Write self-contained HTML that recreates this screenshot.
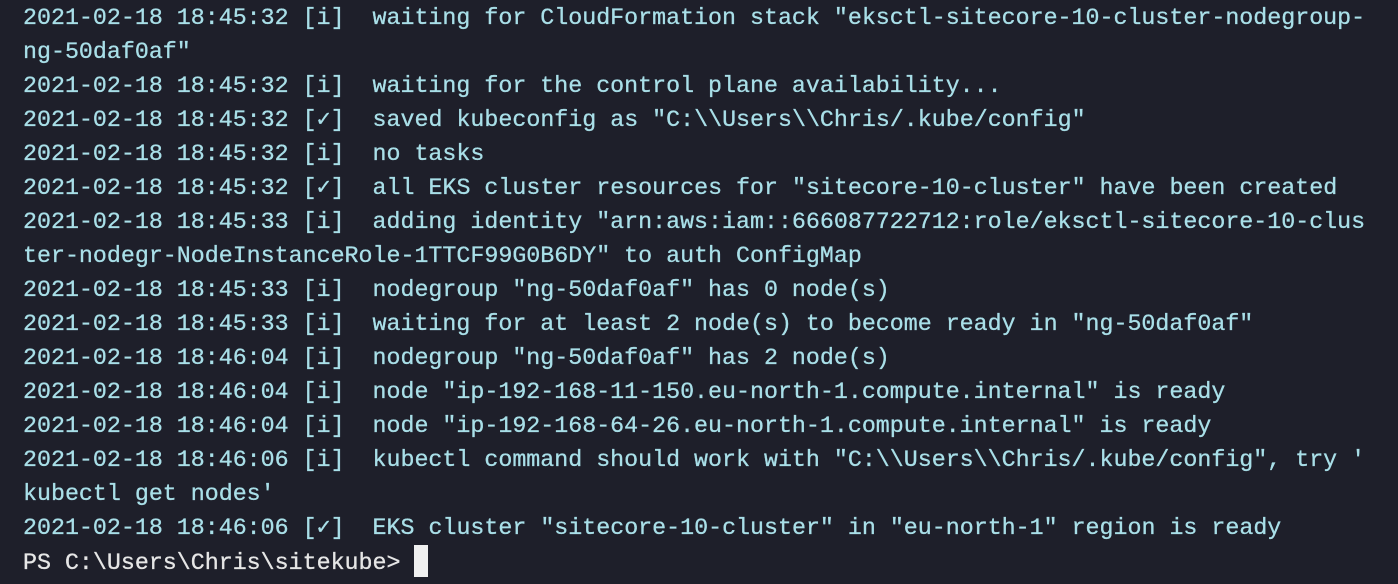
<!DOCTYPE html>
<html><head><meta charset="utf-8"><style>
html,body{margin:0;padding:0;background:#1e1f2a;width:1398px;height:584px;overflow:hidden}
pre{margin:0;padding:1px 0 0 23px;font-family:"Liberation Mono",monospace;font-size:23.3px;line-height:34px;color:#a9dfe8;white-space:pre;-webkit-text-stroke:0.3px currentColor}
.ps{color:#e6e6e6}
.cur{display:inline-block;width:14px;height:32px;background:#f0f0f0;vertical-align:-8px}
</style></head><body><pre>2021-02-18 18:45:32 [i]  waiting for CloudFormation stack "eksctl-sitecore-10-cluster-nodegroup-
ng-50daf0af"
2021-02-18 18:45:32 [i]  waiting for the control plane availability...
2021-02-18 18:45:32 [✓]  saved kubeconfig as "C:\\Users\\Chris/.kube/config"
2021-02-18 18:45:32 [i]  no tasks
2021-02-18 18:45:32 [✓]  all EKS cluster resources for "sitecore-10-cluster" have been created
2021-02-18 18:45:33 [i]  adding identity "arn:aws:iam::666087722712:role/eksctl-sitecore-10-clus
ter-nodegr-NodeInstanceRole-1TTCF99G0B6DY" to auth ConfigMap
2021-02-18 18:45:33 [i]  nodegroup "ng-50daf0af" has 0 node(s)
2021-02-18 18:45:33 [i]  waiting for at least 2 node(s) to become ready in "ng-50daf0af"
2021-02-18 18:46:04 [i]  nodegroup "ng-50daf0af" has 2 node(s)
2021-02-18 18:46:04 [i]  node "ip-192-168-11-150.eu-north-1.compute.internal" is ready
2021-02-18 18:46:04 [i]  node "ip-192-168-64-26.eu-north-1.compute.internal" is ready
2021-02-18 18:46:06 [i]  kubectl command should work with "C:\\Users\\Chris/.kube/config", try '
kubectl get nodes'
2021-02-18 18:46:06 [✓]  EKS cluster "sitecore-10-cluster" in "eu-north-1" region is ready
<span class="ps">PS C:\Users\Chris\sitekube&gt; <span class="cur"></span></span></pre></body></html>
